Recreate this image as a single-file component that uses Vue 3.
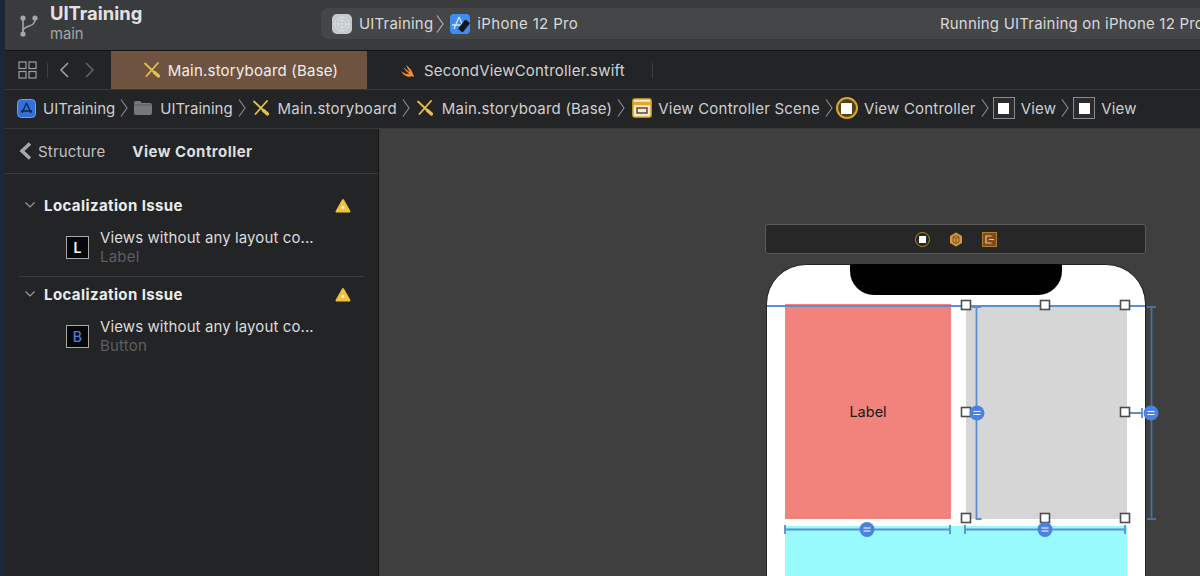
<template>
  <div class="xcode">
    <div class="edge"></div>
    <div class="main">
      <header class="toolbar">
        <svg class="branch" viewBox="0 0 24 26" width="24" height="26">
          <g fill="none" stroke="#a6a7a8" stroke-width="1.6">
            <path d="M6 6v14" />
            <path d="M18 6c0 5-3 6-6 7s-6 2-6 5" />
          </g>
          <g fill="#a6a7a8">
            <circle cx="6" cy="5" r="2.6" />
            <circle cx="18" cy="5" r="2.6" />
            <circle cx="6" cy="21" r="2.6" />
          </g>
        </svg>
        <div class="project">
          <div class="project-name">UITraining</div>
          <div class="project-branch">main</div>
        </div>
        <div class="status-pill">
          <svg class="scheme-icon" viewBox="0 0 20 20" width="20" height="20">
            <rect width="20" height="20" rx="5" fill="#c4cacd" />
            <g fill="none" stroke="#e3e6e8" stroke-width="1">
              <circle cx="10" cy="10" r="7" stroke-dasharray="2 1" />
              <circle cx="10" cy="10" r="4" stroke-dasharray="2 1" />
              <path d="M3 10h14M10 3v14" stroke-dasharray="1.5 1.5" />
            </g>
          </svg>
          <span class="pill-text">UITraining</span>
          <svg class="chev" viewBox="0 0 8 20" width="8" height="20"><path d="M1 1.5l6 8.5-6 8.5" fill="none" stroke="#b4b5b6" stroke-width="1.1" /></svg>
          <svg class="device-icon" viewBox="0 0 20 20" width="20" height="20">
            <rect width="20" height="20" rx="4" fill="#3f8def" />
            <path d="M9 3L4 15M9 3l5 11M2 11h14" stroke="#cfe3fb" stroke-width="1.4" fill="none" />
            <rect x="11" y="6" width="6" height="12" rx="1" fill="#15161a" transform="rotate(38 14 12)" />
          </svg>
          <span class="pill-text pill-text--device">iPhone 12 Pro</span>
          <span class="running">Running UITraining on iPhone 12 Pro</span>
        </div>
      </header>

      <nav class="tabbar">
        <div class="tab-tools">
          <svg viewBox="0 0 19 18" width="19" height="18">
            <g fill="none" stroke="#9c9d9e" stroke-width="1.2">
              <rect x="1" y="1" width="7" height="6.5" />
              <rect x="11" y="1" width="7" height="6.5" />
              <rect x="1" y="10.5" width="7" height="6.5" />
              <rect x="11" y="10.5" width="7" height="6.5" />
            </g>
          </svg>
          <span class="tool-sep"></span>
          <svg viewBox="0 0 10 16" width="10" height="16"><path d="M9 1L2 8l7 7" fill="none" stroke="#a2a3a4" stroke-width="1.5" /></svg>
          <svg class="next" viewBox="0 0 10 16" width="10" height="16"><path d="M1 1l7 7-7 7" fill="none" stroke="#636465" stroke-width="1.5" /></svg>
        </div>
        <div class="tab tab--active">
          <svg viewBox="0 0 16 16" width="16" height="16">
            <path d="M1 1.5l10.5 10M14 1L2.5 14" stroke="#e6c04e" stroke-width="1.8" fill="none" stroke-linecap="round" />
            <path d="M10.5 10.5l4 3.5" stroke="#e6c04e" stroke-width="3.4" fill="none" stroke-linecap="round" />
          </svg>
          <span>Main.storyboard (Base)</span>
        </div>
        <div class="tab tab--file">
          <svg viewBox="0 0 17 16" width="17" height="16">
            <path d="M1 9c3 2.5 6 3.500 8 2.800C7 10 4.500 7.500 3 5c2.500 2.200 5 4 7 5.200C8.500 8 7 5.500 6 3c3.500 2.500 6.500 6 6.800 9 1.200 1.500 1.400 2.800 1.200 3.200-.6-.9-1.700-1.200-2.700-.8C9 15.500 4 14.500 1 9z" fill="#ee8c3f" />
          </svg>
          <span>SecondViewController.swift</span>
        </div>
        <span class="tab-end"></span>
      </nav>

      <div class="crumbs">
        <template v-for="(c, i) in crumbs" :key="i">
          <svg v-if="c.icon === 'app'" class="crumb-icon crumb-icon--app" viewBox="0 0 19 19" width="19" height="19">
            <rect x=".5" y=".5" width="18" height="18" rx="4" fill="#3170d8" stroke="#6fa2ee" />
            <path d="M9.5 4L5 14M9.5 4L14 14M4 12h11" stroke="#10233f" stroke-width="1.3" fill="none" />
          </svg>
          <svg v-else-if="c.icon === 'folder'" class="crumb-icon crumb-icon--folder" viewBox="0 0 18 14" width="18" height="14">
            <path d="M0 2q0-2 2-2h4l2 2h8q2 0 2 2v8q0 2-2 2H2q-2 0-2-2z" fill="#77787a" />
            <path d="M0 4h18" stroke="#5b5c5e" />
          </svg>
          <svg v-else-if="c.icon === 'board'" class="crumb-icon crumb-icon--board" viewBox="0 0 16 16" width="16" height="16">
            <path d="M1 1.5l10.5 10M14 1L2.5 14" stroke="#e6c04e" stroke-width="1.8" fill="none" stroke-linecap="round" />
            <path d="M10.5 10.5l4 3.5" stroke="#e6c04e" stroke-width="3.4" fill="none" stroke-linecap="round" />
          </svg>
          <svg v-else-if="c.icon === 'scene'" class="crumb-icon crumb-icon--scene" viewBox="0 0 20 20" width="20" height="20">
            <rect x="1" y="1" width="18" height="18" rx="2" fill="#efe9d5" stroke="#e0a92e" stroke-width="1.6" />
            <path d="M1 5.500h18" stroke="#e0a92e" stroke-width="3.5" />
            <rect x="5" y="10" width="10" height="5" fill="none" stroke="#4b4326" stroke-width="1.4" />
          </svg>
          <span v-else-if="c.icon === 'vc'" class="vc-icon"><i></i></span>
          <span v-else-if="c.icon === 'view'" class="view-icon"><i></i></span>
          <span class="crumb-text" :class="{ 'crumb-text--tight': c.text === 'UITraining' }">{{ c.text }}</span>
          <svg v-if="i < crumbs.length - 1" class="crumb-chev" viewBox="0 0 8 20" width="8" height="20"><path d="M1 1.5l6 8.5-6 8.5" fill="none" stroke="#8b8c8d" stroke-width="1.1" /></svg>
        </template>
      </div>

      <div class="body">
        <aside class="issues">
          <div class="issues-head">
            <svg viewBox="0 0 13 18" width="13" height="18"><path d="M11 1.500L3 9l8 7.500" fill="none" stroke="#a6a7a8" stroke-width="3.500" /></svg>
            <span class="back">Structure</span>
            <span class="head-title">View Controller</span>
          </div>
          <div class="issue-list">
            <section v-for="(issue, i) in issues" :key="i" class="issue">
              <div class="issue-title">
                <svg viewBox="0 0 10 6" width="10" height="6"><path d="M.5.5L5 5 9.5.5" fill="none" stroke="#9a9b9c" stroke-width="1.2" /></svg>
                <span class="issue-name">Localization Issue</span>
                <svg class="warn" viewBox="0 0 16 15" width="16" height="15">
                  <path d="M8 2L14.5 13.5H1.5z" fill="#f3c23c" stroke="#f3c23c" stroke-width="2" stroke-linejoin="round" />
                  <circle cx="8" cy="9.5" r="1.4" fill="#fff" />
                </svg>
              </div>
              <div class="issue-row">
                <span class="badge" :class="{ 'badge--blue': issue.letter === 'B' }">{{ issue.letter }}</span>
                <div>
                  <div class="issue-text">Views without any layout co...</div>
                  <div class="issue-sub">{{ issue.sub }}</div>
                </div>
              </div>
            </section>
          </div>
        </aside>

        <main class="canvas">
          <div class="scene-dock">
            <span class="dock-vc"><i></i></span>
            <svg viewBox="0 0 14 15" width="14" height="15">
              <path d="M7 .5l6 3.500v7l-6 3.500-6-3.500v-7z" fill="#d9953a" />
              <path d="M4 5l3-1.500L10 5v5l-3 1.500L4 10zM7 6.500V11M4 5l3 1.500L10 5" fill="none" stroke="#7a5424" />
            </svg>
            <svg viewBox="0 0 15 15" width="15" height="15">
              <rect x=".5" y=".5" width="14" height="14" fill="#7a4f1d" stroke="#b77a2c" />
              <path d="M9.5 4H4v7h5.500M7 7.500h5" fill="none" stroke="#ecc28a" stroke-width="1.2" />
            </svg>
          </div>

          <div class="phone">
            <div class="notch"></div>
            <div class="screen">
              <div class="screen-top">
                <div class="red-view">Label</div>
                <div class="gray-view"></div>
              </div>
              <div class="cyan-view"></div>
            </div>

            <!-- selection overlay, coordinates are relative to the phone -->
            <svg class="overlay" viewBox="0 0 382 320" width="382" height="320">
              <g fill="none" stroke="#5b8fce" stroke-width="1.8">
                <path d="M1 42h378" />
                <path d="M206 43h9M210.5 43v212h5" />
                <path d="M381 43h9M385.5 43v212M381 255h9" stroke="#47709f" />
                <path d="M19 261v9M19 265.5h165M184 261v9" />
                <path d="M199 261v9M199 265.5h160M359 261v9" />
                <path d="M360 149h16M376 144v10" />
              </g>
              <g fill="#fff" stroke="#4d4d4d" stroke-width="1.6">
                <rect v-for="(h, i) in handles" :key="i" :x="h[0] - 4.5" :y="h[1] - 4.5" width="9" height="9" />
              </g>
              <g v-for="(d, i) in dots" :key="'d' + i">
                <circle :cx="d[0]" :cy="d[1]" r="7.5" fill="#4b82dd" />
                <path :d="`M${d[0] - 3.5} ${d[1] - 1.5}h7M${d[0] - 3.5} ${d[1] + 1.5}h7`" stroke="#fff" stroke-width="1.2" />
              </g>
            </svg>
          </div>
        </main>
      </div>
    </div>
  </div>
</template>

<script setup>
const crumbs = [
  { icon: 'app', text: 'UITraining' },
  { icon: 'folder', text: 'UITraining' },
  { icon: 'board', text: 'Main.storyboard' },
  { icon: 'board', text: 'Main.storyboard (Base)' },
  { icon: 'scene', text: 'View Controller Scene' },
  { icon: 'vc', text: 'View Controller' },
  { icon: 'view', text: 'View' },
  { icon: 'view', text: 'View' }
]

const issues = [
  { letter: 'L', sub: 'Label' },
  { letter: 'B', sub: 'Button' }
]

const handles = [
  [200, 41], [279, 41], [359, 41],
  [200, 148], [359, 148],
  [200, 254], [279, 254], [359, 254]
]

const dots = [
  [211, 149], [385, 149], [101, 265.5], [279, 265.5]
]
</script>

<style>
html, body { background: #3f3f3f; overflow: hidden; }
</style>

<style scoped>
.xcode {
  display: flex; width: 1200px; height: 576px; overflow: hidden;
  font-family: Inter, "Liberation Sans", sans-serif; color: #dcdcdd;
  font-size: 15px; letter-spacing: .2px;
}
.edge { width: 5px; flex: none; background: #1b2836; }
.main { flex: 1; display: flex; flex-direction: column; min-width: 0; }

.toolbar {
  height: 50px; flex: none; display: flex; align-items: center;
  background: #3a3b3d; border-bottom: 1px solid #111;
}
.branch { margin: 2px 0 0 12px; }
.project { width: 271px; margin-left: 9px; flex: none; }
.project-name { font-size: 18.4px; font-weight: 700; line-height: 20px; color: #e2e2e3; letter-spacing: 0; margin-top: -4px; }
.project-branch { font-size: 14.8px; line-height: 18px; color: #a5a6a7; letter-spacing: 0; margin-top: 2px; }
.status-pill {
  flex: 1; height: 31px; display: flex; align-items: center; white-space: nowrap;
  background: #454648; border-radius: 7px 0 0 7px; padding-left: 11px; margin-top: -3px;
}
.pill-text { color: #d9d9da; margin-left: 7px; }
.pill-text--device { letter-spacing: .35px; }
.chev { margin: 0 6px 0 3px; }
.running { margin-left: auto; margin-right: -4px; color: #d9d9da; }

.tabbar {
  height: 38px; flex: none; display: flex; align-items: center;
  background: #232426; border-bottom: 1px solid #37383a;
}
.tab-tools { width: 106px; flex: none; display: flex; align-items: center; padding-left: 13px; box-sizing: border-box; }
.tool-sep { width: 1px; height: 15px; background: #3e3f41; margin: 0 11px 0 10px; }
.next { margin-left: 16px; }
.tab { display: flex; align-items: center; height: 100%; flex: none; box-sizing: border-box; }
.tab--active { width: 256px; background: #6e5440; color: #f0eeec; justify-content: center; gap: 8px; padding-left: 4px; }
.tab--file { width: 285px; color: #d2d2d3; padding-left: 33px; gap: 7px; }
.tab-end { width: 1px; height: 15px; background: #3e3f41; }

.crumbs {
  height: 36px; flex: none; display: flex; align-items: center; white-space: nowrap;
  background: #232426; border-bottom: 1px solid #37383a; padding: 0 0 2px 12px;
}
.crumb-icon { flex: none; }
.crumb-icon--app { margin-right: 7px; }
.crumb-icon--folder { margin: 0 8px 0 -1px; }
.crumb-icon--board { margin-right: 9px; }
.crumb-icon--scene { margin-right: 6px; }
.crumb-text { color: #cfcfd0; }
.crumb-text--tight { letter-spacing: 0; }
.crumb-chev { margin: 0 7px 0 5px; flex: none; }
.vc-icon {
  width: 22px; height: 22px; box-sizing: border-box; border-radius: 50%; margin: 0 6px 0 -4px;
  border: 2px solid #dca52f; background: #4e4520; display: flex; align-items: center; justify-content: center;
}
.vc-icon i { width: 11px; height: 11px; background: #fff; }
.view-icon {
  width: 22px; height: 22px; box-sizing: border-box; margin: 0 6px 0 -3px;
  border: 1.5px solid #8a8b8c; background: #2b2c2e; display: flex; align-items: center; justify-content: center;
}
.view-icon i { width: 11px; height: 11px; background: #fff; }

.body { flex: 1; display: flex; min-height: 0; }
.issues { width: 374px; flex: none; background: #232426; box-sizing: border-box; border-right: 1px solid #151516; }
.issues-head {
  height: 45px; box-sizing: border-box; display: flex; align-items: center;
  border-bottom: 1px solid #3a3b3d; padding-left: 14px;
}
.back { margin-left: 6px; color: #c0c0c1; }
.head-title { margin-left: 27px; font-weight: 700; color: #dedede; letter-spacing: .45px; }
.issue-list { padding: 23px 14px 0; }
.issue + .issue { border-top: 1px solid #3a3b3d; margin-top: 10px; padding-top: 9px; }
.issue-title { display: flex; align-items: center; height: 16px; padding-left: 6px; }
.issue-name { margin-left: 9px; font-weight: 700; color: #ececec; letter-spacing: .4px; }
.warn { margin-left: auto; margin-right: 13px; }
.issue-row { display: flex; align-items: center; gap: 11px; padding: 15px 0 0 47px; }
.badge {
  width: 23px; height: 23px; box-sizing: border-box; flex: none;
  border: 1.5px solid #a8a9aa; background: #08080a; color: #fff;
  font-size: 14px; font-weight: 600; display: flex; align-items: center; justify-content: center;
}
.badge--blue { color: #4a7fe0; font-weight: 500; }
.issue-text { line-height: 19px; color: #dcdcdd; white-space: nowrap; letter-spacing: .1px; }
.issue-sub { line-height: 19px; color: #5d5e60; }

.canvas { flex: 1; position: relative; background: #3f3f3f; min-width: 0; overflow: hidden; }
/* free canvas: scene items sit at their own place */
.scene-dock {
  position: absolute; left: 386px; top: 95px; width: 381px; height: 30px; box-sizing: border-box;
  display: flex; align-items: center; padding-left: 149px; gap: 19px;
  background: #272727; border: 1px solid #5a5a5a; border-radius: 3px;
}
.dock-vc {
  width: 15px; height: 15px; box-sizing: border-box; border-radius: 50%; border: 1.5px solid #b38a25;
  display: flex; align-items: center; justify-content: center;
}
.dock-vc i { width: 7px; height: 7px; background: #fff; }
.phone {
  position: absolute; left: 387px; top: 135px; width: 380px; height: 340px; box-sizing: border-box;
  background: #fff; border: 1.5px solid #222; border-radius: 40px 40px 0 0;
}
.notch {
  position: absolute; left: 83px; top: -1px; width: 212px; height: 31px;
  background: #000; border-radius: 0 0 24px 24px;
}
.screen { padding: 39px 18px 0; display: flex; flex-direction: column; gap: 7px; }
.screen-top { display: flex; height: 214.5px; gap: 15px; }
.red-view {
  width: 166px; background: #f1837c; color: #1a1a1a; font-size: 14.5px; letter-spacing: 0;
  display: flex; align-items: center; justify-content: center;
}
.gray-view { flex: 1; background: #d6d6d6; margin-top: 1px; }
.cyan-view { height: 60px; background: #99fafe; }
.overlay { position: absolute; left: -1.5px; top: -1.5px; overflow: visible; }
</style>
